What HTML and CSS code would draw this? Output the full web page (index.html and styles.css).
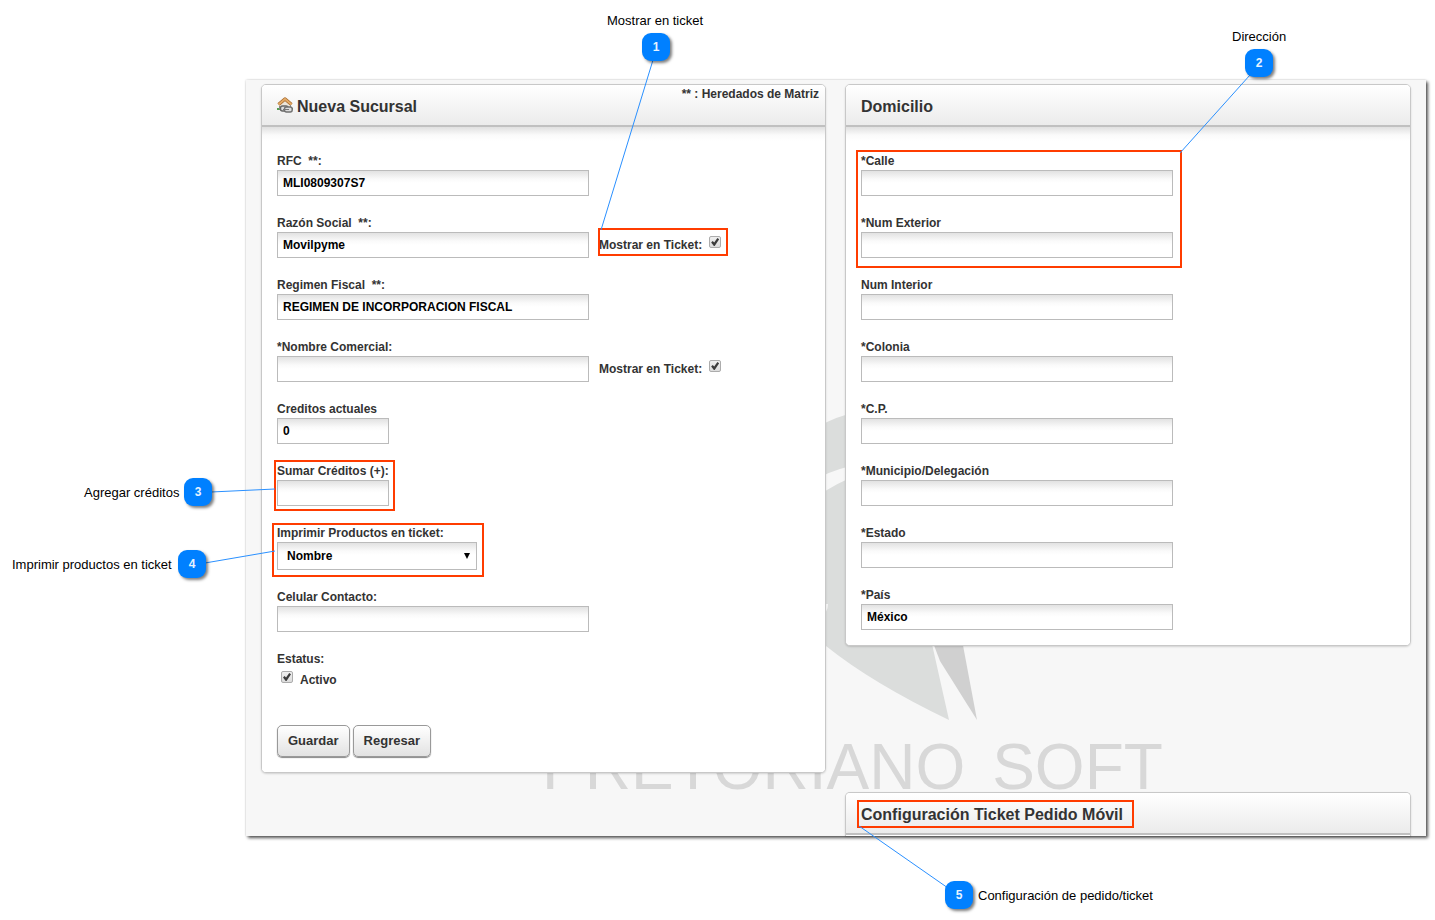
FILE: index.html
```html
<!DOCTYPE html>
<html lang="es">
<head>
<meta charset="utf-8">
<title>Nueva Sucursal</title>
<link rel="stylesheet" href="styles.css">
</head>
<body>
<div class="stage">
  <main class="screen">
    <svg class="emblem" width="160" height="320" viewBox="820 410 160 320" aria-hidden="true">
      <path fill="#dbdddc" d="M820 426Q834 417 860 411V464Q838 468 820 477Z"/>
      <path fill="#dbdddc" d="M820 495Q834 484 860 474L932 644L949 720Q872 683 826 646L820 641V617Q828 613 828 604H820Z"/>
      <path fill="#d0d0d0" d="M932 640H962L977 720L940 661Z"/>
    </svg>
    <div class="brand" aria-hidden="true"><span>PRETORIANO</span><span>SOFT</span></div>
    <form class="columns">
      <section class="card">
        <header class="card-head">
          <svg class="house" width="16" height="16" viewBox="0 0 16 16" aria-hidden="true">
            <path fill="#ece6da" d="M3 7L8 3L13 7V14H3Z"/>
            <path fill="#55a052" d="M0 11H5V13H0ZM12 11H16V13H12Z"/>
            <path fill="none" stroke="#a8692b" stroke-width="3.4" stroke-linejoin="round" d="M1.500 7.500L8 2L14.500 7.500"/>
            <path fill="none" stroke="#e3ab68" stroke-width="1.8" d="M1.500 7.500L8 2L14.500 7.500"/>
            <path stroke="#8b8b88" d="M2.500 9V12.500M13.500 8V10"/>
            <rect x="3.500" y="9" width="7.500" height="5" rx="2" fill="#ddd" stroke="#666" stroke-width="1.400"/>
            <rect x="7.500" y="10" width="7.700" height="5" rx="2" fill="#ddd" stroke="#707070" stroke-width="1.400"/>
            <path stroke="#777" d="M6 12.500H12"/>
          </svg>
          <h1 class="title">Nueva Sucursal</h1>
          <span class="hint">** : Heredados de Matriz</span>
        </header>
        <div class="card-body">
          <div class="field"><label class="label" for="rfc">RFC&nbsp; **:</label><input class="input" id="rfc" value="MLI0809307S7"></div>
          <div class="field"><label class="label" for="razon">Razón Social&nbsp; **:</label>
            <div class="row"><input class="input" id="razon" value="Movilpyme"><label class="inline" for="t1">Mostrar en Ticket:</label><input class="check raised" type="checkbox" id="t1" checked></div></div>
          <div class="field"><label class="label" for="regimen">Regimen Fiscal&nbsp; **:</label><input class="input" id="regimen" value="REGIMEN DE INCORPORACION FISCAL"></div>
          <div class="field"><label class="label" for="nombre">*Nombre Comercial:</label>
            <div class="row"><input class="input" id="nombre"><label class="inline" for="t2">Mostrar en Ticket:</label><input class="check raised" type="checkbox" id="t2" checked></div></div>
          <div class="field"><label class="label" for="creditos">Creditos actuales</label><input class="input short" id="creditos" value="0"></div>
          <div class="field"><label class="label" for="sumar">Sumar Créditos (+):</label><input class="input short" id="sumar"></div>
          <div class="field"><label class="label" for="imprimir">Imprimir Productos en ticket:</label>
            <div class="select-box"><select class="select" id="imprimir"><option>Nombre</option></select><svg class="arrow" width="6" height="6" viewBox="0 0 6 6" aria-hidden="true"><path d="M0 0H6L3 6Z"/></svg></div></div>
          <div class="field"><label class="label" for="celular">Celular Contacto:</label><input class="input" id="celular"></div>
          <div class="status"><span class="label">Estatus:</span>
            <div class="status-row"><input class="check raised" type="checkbox" id="activo" checked><label for="activo">Activo</label></div></div>
          <div class="actions"><button class="btn" type="button">Guardar</button><button class="btn" type="button">Regresar</button></div>
        </div>
      </section>
      <div class="side">
        <section class="card">
          <header class="card-head"><h2 class="title">Domicilio</h2></header>
          <div class="card-body">
            <div class="field"><label class="label" for="calle">*Calle</label><input class="input" id="calle"></div>
            <div class="field"><label class="label" for="ext">*Num Exterior</label><input class="input" id="ext"></div>
            <div class="field"><label class="label" for="int">Num Interior</label><input class="input" id="int"></div>
            <div class="field"><label class="label" for="colonia">*Colonia</label><input class="input" id="colonia"></div>
            <div class="field"><label class="label" for="cp">*C.P.</label><input class="input" id="cp"></div>
            <div class="field"><label class="label" for="mun">*Municipio/Delegación</label><input class="input" id="mun"></div>
            <div class="field"><label class="label" for="estado">*Estado</label><input class="input" id="estado"></div>
            <div class="field"><label class="label" for="pais">*País</label><input class="input" id="pais" value="México"></div>
          </div>
        </section>
        <section class="card cut">
          <header class="card-head"><h2 class="title">Configuración Ticket Pedido Móvil</h2></header>
        </section>
      </div>
    </form>
  </main>

  <div class="box box-1"></div><div class="box box-2"></div><div class="box box-3"></div><div class="box box-4"></div><div class="box box-5"></div>
  <svg class="lines" width="1435" height="920" viewBox="0 0 1435 920" aria-hidden="true">
    <path d="M653 60L601 230M1250 75L1180 153M211 492L275 489M205 563L275 551M948 888L859 826"/>
  </svg>
  <div class="note note-1">Mostrar en ticket</div><div class="badge badge-1">1</div>
  <div class="note note-2">Dirección</div><div class="badge badge-2">2</div>
  <div class="note note-3">Agregar créditos</div><div class="badge badge-3">3</div>
  <div class="note note-4">Imprimir productos en ticket</div><div class="badge badge-4">4</div>
  <div class="note note-5">Configuración de pedido/ticket</div><div class="badge badge-5">5</div>
</div>
</body>
</html>
```
FILE: styles.css
```css
* { box-sizing: border-box; }
body {
  margin: 0;
  background: #fff;
  color: #333;
  font: bold 12px/20px "Liberation Sans", Arial, sans-serif;
}
.stage { position: relative; padding: 80px 9px 84px 246px; }
.screen {
  position: relative;
  padding: 4px 15px 0;
  background: #f7f7f7;
  box-shadow: 0 0 2px rgba(0, 0, 0, .2), 2px 2px 3px rgba(0, 0, 0, .65);
}
.columns {
  position: relative;
  display: grid;
  grid-template-columns: 565fr 566fr;
  gap: 19px;
  align-items: start;
}
.side { display: grid; gap: 146px; }

/* watermark behind the cards */
.emblem { position: absolute; left: 574px; top: 330px; }
.brand {
  position: absolute;
  left: 296px;
  top: 655px;
  display: flex;
  gap: 27px;
  color: #d8d8d8;
  font-weight: normal;
  font-size: 64px;
  line-height: 64px;
  font-kerning: none;
}

.card {
  border: 1px solid #c8c8c8;
  border-radius: 5px;
  background: #fff;
  box-shadow: 0 1px 2px rgba(0, 0, 0, .15);
}
.card-head {
  display: flex;
  align-items: center;
  gap: 4px;
  height: 42px;
  padding: 0 6px 0 15px;
  border-bottom: 2px solid #c0c0c0;
  border-radius: 4px 4px 0 0;
  background: linear-gradient(#fff, #ebebeb);
}
.title { margin: 0; padding-top: 4px; font-size: 16px; line-height: 20px; }
.house { flex: none; }
.hint { align-self: flex-start; margin-left: auto; line-height: 18px; }
.card-body {
  padding: 23px 15px 15px;
  border-radius: 0 0 4px 4px;
  background: linear-gradient(#e0e0e0, #fafafa 8px, #fff 14px);
}
.cut { padding-bottom: 1px; border-bottom: 0; border-radius: 5px 5px 0 0; }

.field { margin-bottom: 16px; }
.field:last-child { margin-bottom: 0; }
.label { display: block; padding-top: 2px; line-height: 18px; }
.input {
  display: block;
  width: 312px;
  max-width: 100%;
  height: 26px;
  padding: 0 5px;
  border: 1px solid #bbb;
  border-radius: 0;
  background: linear-gradient(#e2e2e2, #fafafa 8px, #fff 12px);
  color: #000;
  font: inherit;
}
.short { width: 112px; }
.row { display: flex; align-items: center; }
.inline { margin: 0 7px 0 10px; }
.check {
  appearance: none;
  position: relative;
  flex: none;
  width: 12px;
  height: 12px;
  margin: 0;
  border: 1px solid #acacac;
  border-radius: 2px;
  background: linear-gradient(#efefef, #dcdcdc);
}
.raised { margin-bottom: 6px; }
.check:checked::after {
  content: "";
  position: absolute;
  inset: 1px;
  background: #3c3c3c;
  clip-path: polygon(0 56%, 20% 38%, 38% 56%, 78% 0, 100% 16%, 44% 100%, 34% 100%);
}
.select-box { position: relative; width: 200px; }
.select {
  appearance: none;
  display: block;
  width: 100%;
  height: 28px;
  padding: 0 9px;
  border: 1px solid #bbb;
  border-radius: 0;
  background: linear-gradient(#e2e2e2, #fafafa 8px, #fff 12px);
  color: #000;
  font: inherit;
}
.arrow { position: absolute; right: 7px; top: 11px; pointer-events: none; }
.status-row { display: flex; align-items: center; gap: 7px; height: 24px; padding-left: 4px; }
.actions { display: flex; gap: 3px; margin-top: 33px; }
.btn {
  height: 32px;
  padding: 0 10px;
  border: 1px solid #999;
  border-radius: 5px;
  background: linear-gradient(#fff, #e2e2e2);
  box-shadow: 0 1px 1px #888;
  color: #333;
  font: bold 13px/20px "Liberation Sans", Arial, sans-serif;
}

/* callouts laid over the screen */
.box { position: absolute; border: 2px solid #ff3c00; pointer-events: none; }
.box-1 { left: 598px; top: 228px; width: 130px; height: 28px; }
.box-2 { left: 856px; top: 150px; width: 326px; height: 118px; }
.box-3 { left: 274px; top: 460px; width: 121px; height: 51px; }
.box-4 { left: 272px; top: 523px; width: 212px; height: 54px; }
.box-5 { left: 857px; top: 800px; width: 277px; height: 28px; }
.lines { position: absolute; left: 0; top: 0; fill: none; stroke: #2a90ff; pointer-events: none; }
.note {
  position: absolute;
  color: #000;
  font-weight: normal;
  font-size: 13px;
  white-space: nowrap;
}
.badge {
  position: absolute;
  width: 28px;
  height: 28px;
  border-radius: 9px;
  background: #0080ff;
  box-shadow: 2px 2px 3px rgba(0, 0, 0, .5);
  color: #e8f3ff;
  line-height: 29px;
  text-align: center;
}
.note-1 { left: 607px; top: 11px; }
.badge-1 { left: 642px; top: 33px; }
.note-2 { left: 1232px; top: 27px; }
.badge-2 { left: 1245px; top: 49px; }
.note-3 { left: 84px; top: 483px; }
.badge-3 { left: 184px; top: 478px; }
.note-4 { left: 12px; top: 555px; }
.badge-4 { left: 178px; top: 550px; }
.note-5 { left: 978px; top: 886px; }
.badge-5 { left: 945px; top: 881px; }
```
